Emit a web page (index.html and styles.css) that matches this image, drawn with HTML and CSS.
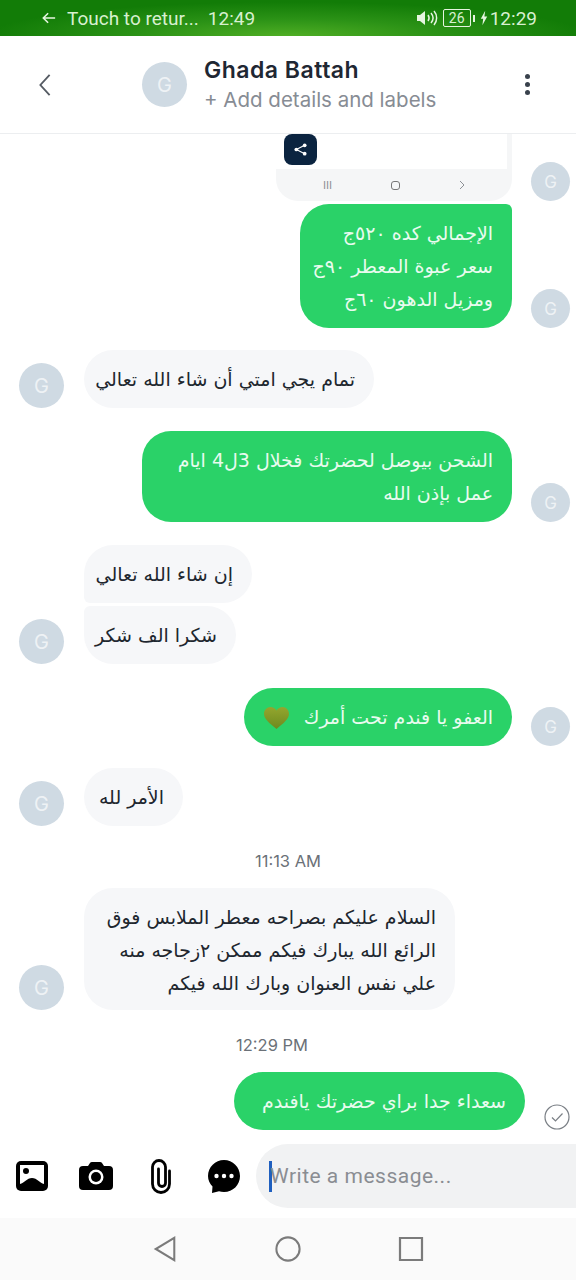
FILE: index.html
```html
<!DOCTYPE html>
<html lang="en">
<head>
    <meta charset="UTF-8">
    <meta name="viewport" content="width=device-width, initial-scale=1.0">
    <title>Ghada Battah</title>
    <link rel="stylesheet" href="styles.css">
</head>
<body>
    <div class="phone">
        <div class="status-bar">
            <div class="status-left">
                <svg class="status-arrow" viewBox="0 0 16 14"><path d="M7 1.500 1.500 7 7 12.500M2 7h13"/></svg>
                <span class="status-return">Touch to retur...</span>
                <span>12:49</span>
            </div>
            <div class="status-right">
                <svg class="status-sound" viewBox="0 0 22 16"><path class="fill" d="M1 5h3l5-4v14l-5-4H1z"/><path d="M12 5c1.300 1.800 1.300 4.200 0 6M15 3c2.500 3 2.500 7 0 10M18 1c3.500 4 3.500 10 0 14"/></svg>
                <span class="battery">26</span>
                <span class="battery-tip"></span>
                <svg class="status-bolt" viewBox="0 0 10 18"><path d="M6.500 0 1 10h3l-1 8 6-11H5.500z"/></svg>
                <span>12:29</span>
            </div>
        </div>

        <header class="chat-header">
            <svg class="back-icon" viewBox="0 0 14 26"><path d="M12 2 2 13l10 11"/></svg>
            <div class="avatar avatar-big">G</div>
            <div class="contact">
                <div class="contact-name">Ghada Battah</div>
                <div class="contact-sub">+ Add details and labels</div>
            </div>
            <div class="more-icon"><span></span><span></span><span></span></div>
        </header>

        <main class="thread">
            <div class="row row-out">
                <div class="shot-card">
                    <div class="shot-screen"><div class="share-btn">
                        <svg viewBox="0 0 14 14"><path class="share-line" d="M11.500 2.500 2.500 7l9 4.500"/><circle cx="11.500" cy="2.500" r="2"/><circle cx="2.500" cy="7" r="2"/><circle cx="11.500" cy="11.500" r="2"/></svg>
                    </div></div>
                    <div class="shot-nav">
                        <span class="shot-bars">III</span>
                        <span class="shot-home"></span>
                        <svg class="shot-chevron" viewBox="0 0 6 10"><path d="m1 1 4 4-4 4"/></svg>
                    </div>
                </div>
                <div class="avatar avatar-out">G</div>
            </div>

            <div class="row row-out gap-3">
                <div class="bubble bubble-out bubble-joined w-212" dir="rtl">الإجمالي كده ٥٢٠ج<br>سعر عبوة المعطر ٩٠ج<br>ومزيل الدهون ٦٠ج</div>
                <div class="avatar avatar-out">G</div>
            </div>

            <div class="row row-in gap-22">
                <div class="avatar avatar-in">G</div>
                <div class="bubble bubble-in w-290" dir="rtl">تمام يجي امتي أن شاء الله تعالي</div>
            </div>

            <div class="row row-out gap-23">
                <div class="bubble bubble-out w-370" dir="rtl">الشحن بيوصل لحضرتك فخلال 3ل4 ايام<br>عمل بإذن الله</div>
                <div class="avatar avatar-out">G</div>
            </div>

            <div class="row row-in gap-23">
                <div class="avatar avatar-in">G</div>
                <div class="stack">
                    <div class="bubble bubble-in stack-top w-168" dir="rtl">إن شاء الله تعالي</div>
                    <div class="bubble bubble-in stack-bottom w-152" dir="rtl">شكرا الف شكر</div>
                </div>
            </div>

            <div class="row row-out gap-24">
                <div class="bubble bubble-out w-268" dir="rtl">العفو يا فندم تحت أمرك
                    <svg class="heart" viewBox="0 0 24 22"><defs><linearGradient id="heart-fill" x1="0" y1="0" x2="0" y2="1"><stop offset="0" stop-color="#94a62e"/><stop offset="1" stop-color="#6d8a1e"/></linearGradient></defs><path fill="url(#heart-fill)" d="M12 21C5 15.500 0 11.500 0 6.500 0 2.800 2.800 0 6.200 0 8.500 0 10.800 1.200 12 3.200 13.200 1.200 15.500 0 17.800 0 21.200 0 24 2.800 24 6.500c0 5-5 9-12 14.500z"/></svg>
                </div>
                <div class="avatar avatar-out">G</div>
            </div>

            <div class="row row-in gap-22">
                <div class="avatar avatar-in">G</div>
                <div class="bubble bubble-in w-99" dir="rtl">الأمر لله</div>
            </div>

            <div class="time">11:13 AM</div>

            <div class="row row-in gap-17">
                <div class="avatar avatar-in">G</div>
                <div class="bubble bubble-in bubble-tight w-371" dir="rtl">السلام عليكم بصراحه معطر الملابس فوق<br>الرائع الله يبارك فيكم ممكن ٢زجاجه منه<br>علي نفس العنوان وبارك الله فيكم</div>
            </div>

            <div class="time time-offset">12:29 PM</div>

            <div class="row row-out gap-17">
                <div class="bubble bubble-out w-291" dir="rtl">سعداء جدا براي حضرتك يافندم</div>
                <svg class="sent-icon" viewBox="0 0 26 26"><circle cx="13" cy="13" r="12"/><path d="m8 13.500 3.500 3.500 7-7.500"/></svg>
            </div>
        </main>

        <div class="composer">
            <div class="composer-icons">
                <svg class="tool tool-image" viewBox="0 0 32 30"><rect x="0" y="0" width="32" height="30" rx="5"/><path class="hole" d="M4 4h24v19c-4-1-7-6-12-6s-8 5-12 6z"/><circle class="dot" cx="10" cy="10" r="3"/></svg>
                <svg class="tool tool-camera" viewBox="0 0 34 28"><path d="M4 4h5l2-3q.5-1 2-1h8q1.500 0 2 1l2 3h5a4 4 0 0 1 4 4v16a4 4 0 0 1-4 4H4a4 4 0 0 1-4-4V8a4 4 0 0 1 4-4z"/><circle class="hole" cx="17" cy="15" r="7.500"/><circle cx="17" cy="15" r="5"/></svg>
                <svg class="tool tool-clip" viewBox="0 0 24 36"><path d="M21.500 13v13a8.500 8.500 0 0 1-17 0V9a6.500 6.500 0 0 1 13 0v16a3.500 3.500 0 0 1-7 0V11"/></svg>
                <svg class="tool tool-bubble" viewBox="0 0 32 33"><path d="M16 0c8.800 0 16 7 16 16s-7.200 16-16 16c-1.800 0-3.500-.3-5-.8L4 33l.5-6.500C1.800 23.500 0 20 0 16 0 7 7.200 0 16 0z"/><circle class="hole" cx="8.500" cy="16" r="2.200"/><circle class="hole" cx="16" cy="16" r="2.200"/><circle class="hole" cx="23.500" cy="16" r="2.200"/></svg>
            </div>
            <div class="message-input"><span class="caret"></span><span>Write a message...</span></div>
        </div>

        <nav class="nav-bar">
            <svg class="nav-btn" viewBox="0 0 24 28"><path d="M22 2v24L2 14z"/></svg>
            <svg class="nav-btn" viewBox="0 0 28 28"><circle cx="14" cy="14" r="12.500"/></svg>
            <svg class="nav-btn" viewBox="0 0 26 26"><path d="M2 2h22v22H2z"/></svg>
        </nav>
    </div>
</body>
</html>
```

FILE: styles.css
```css
* {
    box-sizing: border-box;
}
body {
    margin: 0;
    background: #fff;
    font-family: "Inter", "DejaVu Sans", sans-serif;
}
.phone {
    width: 576px;
    height: 1280px;
    display: flex;
    flex-direction: column;
    overflow: hidden;
}

/* status bar */
.status-bar {
    height: 36px;
    flex: none;
    display: flex;
    justify-content: space-between;
    align-items: center;
    padding: 0 39px 0 42px;
    color: #d8f0d0;
    font-family: "Roboto", sans-serif;
    font-size: 19px;
    background: radial-gradient(ellipse 300px 34px at 50% 100%, #4fae24 0%, #2b9216 50%, #127c07 100%);
}
.status-left, .status-right {
    display: flex;
    align-items: center;
}
.status-arrow {
    width: 14px;
    height: 14px;
    margin-right: 11px;
    fill: none;
    stroke: #e6f5e0;
    stroke-width: 1.800;
}
.status-return {
    margin-right: 9px;
}
.status-sound {
    width: 22px;
    height: 16px;
    margin-right: 5px;
    fill: none;
    stroke: #e6f5e0;
    stroke-width: 1.500;
}
.status-sound .fill {
    fill: #e6f5e0;
    stroke: none;
}
.battery {
    width: 28px;
    height: 18px;
    border: 1px solid #e6f5e0;
    border-radius: 2px;
    font-size: 14px;
    line-height: 16px;
    text-align: center;
}
.battery-tip {
    width: 2px;
    height: 7px;
    margin: 0 5px 0 2px;
    background: #e6f5e0;
}
.status-bolt {
    width: 8px;
    height: 16px;
    margin-right: 2px;
    fill: #e6f5e0;
}

/* header */
.chat-header {
    height: 98px;
    flex: none;
    display: flex;
    align-items: center;
    padding: 0 46px 0 38px;
    border-bottom: 1px solid #eceef0;
}
.back-icon {
    width: 14px;
    height: 24px;
    fill: none;
    stroke: #555b63;
    stroke-width: 2;
    margin-right: 90px;
}
.avatar {
    flex: none;
    display: flex;
    align-items: center;
    justify-content: center;
    border-radius: 50%;
    background: #cfdae3;
    color: #eef2f5;
}
.avatar-big {
    width: 45px;
    height: 45px;
    font-size: 20px;
    margin-right: 17px;
}
.contact {
    flex: 1;
}
.contact-name {
    font-size: 23px;
    font-weight: 600;
    letter-spacing: 0.5px;
    color: #1f2733;
    line-height: 28px;
    margin-top: -2px;
}
.contact-sub {
    font-size: 20.500px;
    color: #878c94;
    line-height: 24px;
    margin-top: 4px;
}
.more-icon {
    display: flex;
    flex-direction: column;
    gap: 3px;
}
.more-icon span {
    width: 5px;
    height: 5px;
    border-radius: 50%;
    background: #39414c;
}

/* thread */
.thread {
    flex: 1;
    min-height: 0;
    display: flex;
    flex-direction: column;
    overflow: hidden;
}
.row {
    display: flex;
    align-items: flex-end;
    flex: none;
}
.row-out {
    justify-content: flex-end;
    gap: 19px;
    padding-right: 6px;
}
.row-in {
    gap: 20px;
    padding-left: 19px;
}
.gap-3 {
    margin-top: 3px;
}
.gap-17 {
    margin-top: 17px;
}
.gap-22 {
    margin-top: 22px;
}
.gap-23 {
    margin-top: 23px;
}
.gap-24 {
    margin-top: 24px;
}
.avatar-out {
    width: 39px;
    height: 39px;
    font-size: 17px;
}
.avatar-in {
    width: 45px;
    height: 45px;
    font-size: 20px;
}
.stack {
    display: flex;
    flex-direction: column;
    gap: 3px;
}
.bubble {
    padding: 13px 19px 12px;
    font-family: "DejaVu Sans", sans-serif;
    font-size: 19px;
    line-height: 33px;
    white-space: nowrap;
    border-radius: 29px;
    text-align: right;
}
.bubble-out {
    background: #2ad268;
    color: #e9fbef;
}
.bubble-in {
    background: #f6f7f9;
    color: #20262e;
}
.bubble-joined {
    border-top-right-radius: 6px;
}
.bubble-tight {
    padding-bottom: 10px;
}
.stack-top {
    border-bottom-left-radius: 6px;
}
.stack-bottom {
    border-top-left-radius: 6px;
}
.w-99 { width: 99px; }
.w-152 { width: 152px; }
.w-168 { width: 168px; }
.w-212 { width: 212px; }
.w-268 { width: 268px; }
.w-290 { width: 290px; }
.w-291 { width: 291px; }
.w-370 { width: 370px; }
.w-371 { width: 371px; }
.heart {
    width: 25px;
    height: 23px;
    vertical-align: -6px;
    margin-right: 9px;
}
.time {
    flex: none;
    margin-top: 25px;
    text-align: center;
    font-size: 16.500px;
    color: #6b7178;
    line-height: 20px;
}
.time-offset {
    padding-right: 32px;
}
.sent-icon {
    width: 26px;
    height: 26px;
    fill: none;
    stroke: #7a7f85;
    stroke-width: 1.200;
}

/* screenshot card */
.shot-card {
    width: 236px;
    height: 67px;
    background: #f5f6f7;
    border-radius: 0 0 22px 22px;
    display: flex;
    flex-direction: column;
}
.shot-screen {
    height: 35px;
    margin-right: 5px;
    background: #fff;
    position: relative;
}
.share-btn {
    position: absolute;
    left: 8px;
    top: 0;
    width: 33px;
    height: 31px;
    border-radius: 8px;
    background: #0b2440;
    display: flex;
    align-items: center;
    justify-content: center;
}
.share-btn svg {
    width: 13px;
    height: 13px;
    fill: #fff;
}
.share-line {
    fill: none;
    stroke: #fff;
    stroke-width: 1.200;
}
.shot-nav {
    flex: 1;
    display: flex;
    align-items: center;
    padding: 0 47px 0 47px;
    justify-content: space-between;
    color: #8d9196;
}
.shot-bars {
    font-family: "Liberation Sans", sans-serif;
    font-size: 11px;
}
.shot-home {
    width: 9px;
    height: 9px;
    border: 1px solid #777;
    border-radius: 3px;
}
.shot-chevron {
    width: 6px;
    height: 10px;
    fill: none;
    stroke: #8d9196;
}

/* composer */
.composer {
    height: 84px;
    flex: none;
    display: flex;
    align-items: flex-start;
    padding-top: 10px;
}
.composer-icons {
    width: 256px;
    height: 64px;
    flex: none;
    display: flex;
    align-items: center;
    padding-left: 16px;
}
.tool {
    flex: none;
    fill: #000;
}
.tool .hole {
    fill: #fff;
}
.tool .dot {
    fill: #000;
}
.tool-image {
    width: 32px;
    height: 30px;
    margin-right: 31px;
}
.tool-camera {
    width: 34px;
    height: 28px;
    margin-right: 35px;
}
.tool-clip {
    width: 24px;
    height: 36px;
    margin-right: 36px;
    fill: none;
    stroke: #000;
    stroke-width: 2.800;
    stroke-linecap: round;
}
.tool-bubble {
    width: 32px;
    height: 33px;
}
.message-input {
    flex: 1;
    height: 64px;
    background: #f1f2f3;
    border-radius: 32px 0 0 32px;
    display: flex;
    align-items: center;
    padding-left: 13px;
    font-size: 21px;
    color: #8a8d92;
    font-family: "Roboto", sans-serif;
    letter-spacing: 0.500px;
}
.caret {
    width: 3px;
    height: 31px;
    background: #1f5fbf;
    margin-right: -2px;
}

/* nav */
.nav-bar {
    height: 62px;
    flex: none;
    background: #fafafa;
    display: flex;
    align-items: center;
    justify-content: center;
    gap: 97px;
}
.nav-btn {
    width: 26px;
    height: 26px;
    fill: none;
    stroke: #7b7b7b;
    stroke-width: 2.200;
}
```
